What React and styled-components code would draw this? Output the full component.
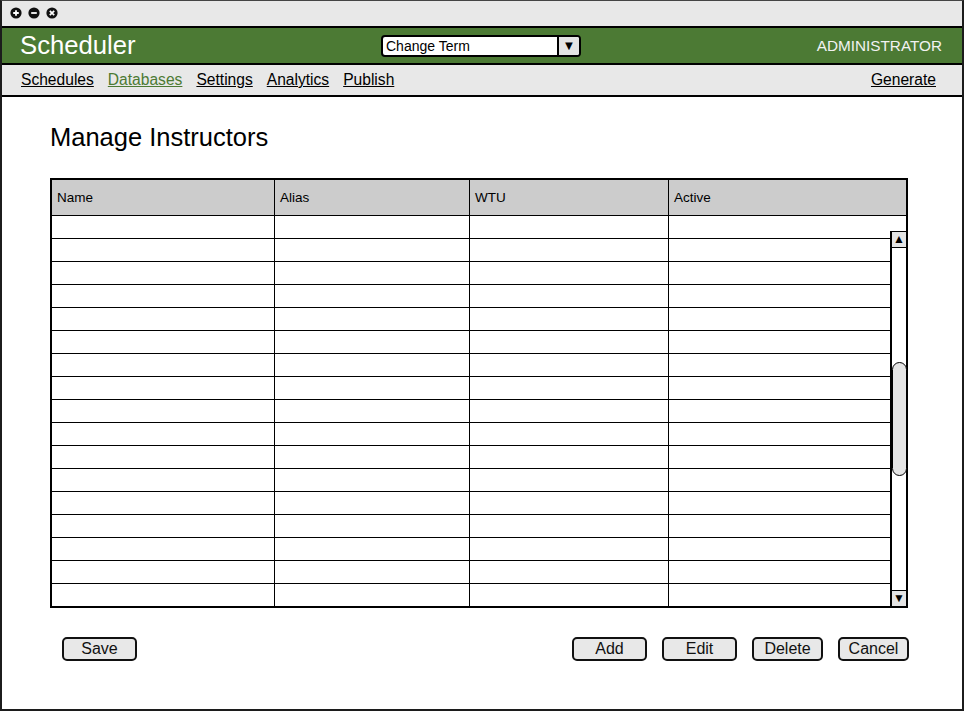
import React from "react";
import styled, { createGlobalStyle } from "styled-components";

const GlobalStyle = createGlobalStyle`
  * { box-sizing: border-box; }
  body {
    margin: 0;
    background: #ffffff;
    font-family: "Liberation Sans", Arial, sans-serif;
    color: #000;
  }
`;

const columns = ["Name", "Alias", "WTU", "Active"];
const rowCount = 17;

const WindowIcon = ({ kind }) => (
  <svg width="12" height="12" viewBox="0 0 12 12">
    <circle cx="6" cy="6" r="5.6" fill="#111" />
    {kind === "plus" && (
      <path d="M3.2 6h5.6M6 3.2v5.6" stroke="#fff" strokeWidth="1.8" />
    )}
    {kind === "minus" && <path d="M3.2 6h5.6" stroke="#fff" strokeWidth="1.8" />}
    {kind === "close" && (
      <path d="M3.8 3.8l4.4 4.4M8.2 3.8l-4.4 4.4" stroke="#fff" strokeWidth="1.7" />
    )}
  </svg>
);

const App = () => {
  return (
    <>
      <GlobalStyle />
      <Window>
        <TitleBar>
          <WindowIcon kind="plus" />
          <WindowIcon kind="minus" />
          <WindowIcon kind="close" />
        </TitleBar>

        <Header>
          <AppName>Scheduler</AppName>
          <Select>
            <SelectText>Change Term</SelectText>
            <SelectArrow>▼</SelectArrow>
          </Select>
          <Role>ADMINISTRATOR</Role>
        </Header>

        <Nav>
          <NavLink>Schedules</NavLink>
          <NavLink $active>Databases</NavLink>
          <NavLink>Settings</NavLink>
          <NavLink>Analytics</NavLink>
          <NavLink>Publish</NavLink>
          <NavLink $right>Generate</NavLink>
        </Nav>

        <Content>
          <Heading>Manage Instructors</Heading>

          <Table>
            <HeadRow>
              {columns.map((c) => (
                <HeadCell key={c}>{c}</HeadCell>
              ))}
            </HeadRow>
            <Body>
              <Rows>
                {Array.from({ length: rowCount }).map((_, i) => (
                  <Row key={i} $last={i === rowCount - 1}>
                    <Cell />
                    <Cell />
                    <Cell />
                    <Cell />
                  </Row>
                ))}
              </Rows>
              <ScrollColumn>
                <ScrollTrack>
                  <ScrollButton>▲</ScrollButton>
                  <TrackSpace>
                    <Thumb />
                  </TrackSpace>
                  <ScrollButton $down>▼</ScrollButton>
                </ScrollTrack>
              </ScrollColumn>
            </Body>
          </Table>

          <Actions>
            <Button $w={75} $first>Save</Button>
            <Spacer />
            <Button $w={75}>Add</Button>
            <Button $w={75}>Edit</Button>
            <Button $w={71}>Delete</Button>
            <Button $w={71}>Cancel</Button>
          </Actions>
        </Content>
      </Window>
    </>
  );
};

export default App;

const Window = styled.div`
  width: 964px;
  height: 711px;
  border: 2px solid #1c1c1c;
  border-top: 1px solid #444;
  display: flex;
  flex-direction: column;
  overflow: hidden;
`;

const TitleBar = styled.div`
  height: 27px;
  background: #e8e8e8;
  border-bottom: 2px solid #000;
  display: flex;
  align-items: center;
  gap: 6px;
  padding-left: 8px;
  padding-bottom: 1px;
`;

const Header = styled.div`
  height: 37px;
  background: #4c7a34;
  border-bottom: 2px solid #000;
  display: grid;
  grid-template-columns: 1fr auto 1fr;
  align-items: center;
  padding: 0 20px 0 18px;
`;

const AppName = styled.div`
  color: #fff;
  font-size: 25.7px;
  line-height: 30px;
  padding-bottom: 2px;
`;

const Select = styled.div`
  width: 200px;
  height: 22px;
  background: #fff;
  border: 2px solid #000;
  border-radius: 4px;
  display: flex;
  align-items: stretch;
  overflow: hidden;
`;

const SelectText = styled.div`
  flex: 1;
  font-size: 14px;
  line-height: 18px;
  padding-left: 3px;
`;

const SelectArrow = styled.div`
  width: 22px;
  background: #e4e4e4;
  border-left: 2px solid #000;
  font-size: 13px;
  display: flex;
  align-items: center;
  justify-content: center;
`;

const Role = styled.div`
  justify-self: end;
  color: #f2f2f2;
  font-size: 15.3px;
`;

const Nav = styled.div`
  height: 32px;
  background: #e8e8e8;
  border-bottom: 2px solid #000;
  display: flex;
  align-items: center;
  gap: 14px;
  padding: 0 26px 0 19px;
`;

const NavLink = styled.a`
  font-size: 15.6px;
  text-decoration: underline;
  color: ${(p) => (p.$active ? "#4c7a34" : "#000")};
  margin-left: ${(p) => (p.$right ? "auto" : "0")};
  cursor: pointer;
`;

const Content = styled.div`
  flex: 1;
  padding: 0 54px 0 48px;
`;

const Heading = styled.h1`
  margin: 25px 0 26px 0;
  font-size: 25.5px;
  font-weight: normal;
  line-height: 30px;
`;

const Table = styled.div`
  width: 858px;
  height: 430px;
  border: 2px solid #000;
  display: flex;
  flex-direction: column;
`;

const HeadRow = styled.div`
  height: 36px;
  background: #cccccc;
  border-bottom: 1px solid #000;
  display: grid;
  grid-template-columns: 223px 195px 199px 1fr;
`;

const HeadCell = styled.div`
  font-size: 13.5px;
  padding-left: 5px;
  display: flex;
  align-items: center;
  border-right: 1px solid #000;
  &:last-child {
    border-right: none;
  }
`;

const Body = styled.div`
  flex: 1;
  display: flex;
`;

const Rows = styled.div`
  flex: 1;
  display: flex;
  flex-direction: column;
`;

const Row = styled.div`
  height: ${(p) => (p.$last ? "22px" : "23px")};
  border-bottom: ${(p) => (p.$last ? "none" : "1px solid #000")};
  display: grid;
  grid-template-columns: 223px 195px 199px 1fr;
`;

const Cell = styled.div`
  border-right: 1px solid #000;
  &:last-child {
    border-right: none;
  }
`;

const ScrollColumn = styled.div`
  width: 16px;
  padding-top: 15px;
  display: flex;
  flex-direction: column;
`;

const ScrollTrack = styled.div`
  flex: 1;
  border-left: 2px solid #000;
  border-top: 1px solid #000;
  display: flex;
  flex-direction: column;
  background: #fff;
`;

const ScrollButton = styled.div`
  height: 16px;
  background: #e4e4e4;
  border-bottom: ${(p) => (p.$down ? "none" : "1px solid #000")};
  border-top: ${(p) => (p.$down ? "1px solid #000" : "none")};
  font-size: 12px;
  line-height: 15px;
  text-align: center;
`;

const TrackSpace = styled.div`
  flex: 1;
  position: relative;
`;

const Thumb = styled.div`
  position: absolute;
  left: 0;
  right: -1px;
  top: 114px;
  height: 114px;
  background: #e4e4e4;
  border: 1.5px solid #000;
  border-radius: 8px;
`;

const Actions = styled.div`
  margin-top: 29px;
  width: 859px;
  display: flex;
  align-items: center;
  gap: 15px;
`;

const Spacer = styled.div`
  flex: 1;
`;

const Button = styled.button`
  width: ${(p) => p.$w}px;
  height: 24px;
  margin-left: ${(p) => (p.$first ? "12px" : "0")};
  background: #e8e8e8;
  border: 2px solid #111;
  border-radius: 5px;
  font-family: "Liberation Sans", Arial, sans-serif;
  font-size: 16px;
  color: #111;
  padding: 0;
  line-height: 18px;
  cursor: pointer;
`;
